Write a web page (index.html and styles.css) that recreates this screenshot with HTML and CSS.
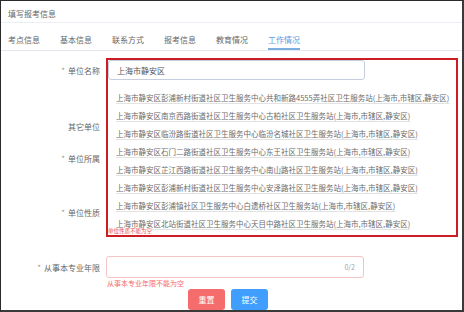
FILE: index.html
```html
<!DOCTYPE html>
<html lang="zh-CN">
<head>
    <meta charset="UTF-8">
    <meta name="viewport" content="width=device-width, initial-scale=1.0">
    <title>填写报考信息</title>
    <link rel="stylesheet" href="styles.css">
</head>
<body>
    <div class="window">
        <div class="title">填写报考信息</div>

        <div class="tabs">
            <span class="tab">考点信息</span>
            <span class="tab">基本信息</span>
            <span class="tab">联系方式</span>
            <span class="tab">报考信息</span>
            <span class="tab">教育情况</span>
            <span class="tab active">工作情况</span>
        </div>

        <div class="form">
            <div class="row row-name">
                <label class="label"><i class="star">*</i>单位名称</label>
                <div class="field">
                    <div class="input">上海市静安区</div>
                </div>
            </div>
            <div class="row row-other">
                <label class="label">其它单位</label>
            </div>
            <div class="row row-belong">
                <label class="label"><i class="star">*</i>单位所属</label>
            </div>
            <div class="row row-type">
                <label class="label"><i class="star">*</i>单位性质</label>
            </div>
            <div class="row row-years">
                <label class="label"><i class="star">*</i>从事本专业年限</label>
                <div class="field">
                    <div class="input input-error">
                        <span class="count">0/2</span>
                    </div>
                </div>
            </div>
            <div class="error">从事本专业年限不能为空</div>
            <div class="buttons">
                <button class="btn btn-reset">重置</button>
                <button class="btn btn-submit">提交</button>
            </div>
        </div>

        <!-- suggestion popup for 单位名称 -->
        <ul class="suggest">
            <li>上海市静安区彭浦新村街道社区卫生服务中心共和新路4555弄社区卫生服务站(上海市,市辖区,静安区)</li>
            <li>上海市静安区南京西路街道社区卫生服务中心古柏社区卫生服务站(上海市,市辖区,静安区)</li>
            <li>上海市静安区临汾路街道社区卫生服务中心临汾名城社区卫生服务站(上海市,市辖区,静安区)</li>
            <li>上海市静安区石门二路街道社区卫生服务中心东王社区卫生服务站(上海市,市辖区,静安区)</li>
            <li>上海市静安区芷江西路街道社区卫生服务中心南山路社区卫生服务站(上海市,市辖区,静安区)</li>
            <li>上海市静安区彭浦新村街道社区卫生服务中心安泽路社区卫生服务站(上海市,市辖区,静安区)</li>
            <li>上海市静安区彭浦镇社区卫生服务中心白遗桥社区卫生服务站(上海市,市辖区,静安区)</li>
            <li>上海市静安区北站街道社区卫生服务中心天目中路社区卫生服务站(上海市,市辖区,静安区)</li>
        </ul>

        <!-- red annotation box -->
        <div class="mark">
            <span class="mark-error">单位性质不能为空</span>
        </div>
    </div>
</body>
</html>
```

FILE: styles.css
```css
* {
    box-sizing: border-box;
}
body {
    margin: 0;
    font-family: "Noto Sans CJK SC", "Noto Sans", sans-serif;
    background-color: white;
    color: #606266;
}
.window {
    position: relative;
    width: 464px;
    height: 312px;
    border-top: 1px solid #2b2b2b;
    border-left: 1px solid #2b2b2b;
    border-right: 2px solid #3a3a3a;
    border-bottom: 2px solid #3a3a3a;
    overflow: hidden;
}
.title {
    padding: 4px 0 0 7px;
    height: 22px;
    line-height: 17px;
    font-size: 8px;
    color: #666;
    border-bottom: 1px solid #ebeef5;
}
.tabs {
    display: flex;
    padding: 9px 0 0 7px;
    border-bottom: 1px solid #e4e7ed;
}
.tab {
    margin-right: 20px;
    font-size: 8px;
    line-height: 16px;
    color: #666;
    border-bottom: 2px solid transparent;
}
.tab.active {
    color: #5a9be0;
    border-bottom-color: #7aaedf;
}
.row {
    display: flex;
    align-items: center;
    height: 22px;
}
.row-name {
    margin-top: 8px;
}
.row-other {
    margin-top: 34px;
}
.row-belong {
    margin-top: 10px;
}
.row-type {
    margin-top: 32px;
}
.row-years {
    margin-top: 33px;
}
.label {
    width: 99px;
    text-align: right;
    font-size: 8px;
    color: #666;
}
.star {
    font-style: normal;
    color: #999;
    margin-right: 3px;
}
.field {
    margin-left: 6px;
}
.input {
    display: flex;
    align-items: center;
    width: 258px;
    height: 22px;
    padding: 0 8px;
    font-size: 8px;
    color: #555;
    border: 1px solid #c6cde0;
    border-radius: 3px;
}
.row-name .input {
    margin-left: 2px;
    width: 257px;
    height: 20px;
}
.input-error {
    justify-content: flex-end;
    border-color: #f4c4c4;
}
.count {
    font-size: 7px;
    color: #a0a3a8;
}
.error {
    margin: 1px 0 0 106px;
    font-size: 7px;
    line-height: 9px;
    color: #f56c6c;
}
.buttons {
    display: flex;
    gap: 6px;
    margin-top: 1px;
    padding-left: 187px;
}
.btn {
    width: 37px;
    height: 21px;
    padding: 0;
    border: none;
    border-radius: 3px;
    font-family: inherit;
    font-size: 8px;
    color: white;
}
.btn-reset {
    background-color: #f56c6c;
}
.btn-submit {
    background-color: #409eff;
}
.suggest {
    position: absolute;
    left: 107px;
    top: 82px;
    width: 348px;
    margin: 0;
    padding: 5px 0 0 0;
    list-style: none;
    background-color: white;
}
.suggest li {
    line-height: 9px;
    padding: 4.5px 0 4.5px 8px;
    font-size: 7.5px;
    color: #6b6b6b;
    white-space: nowrap;
    text-decoration: underline;
    text-decoration-color: #e2e2e2;
    text-underline-offset: 2px;
}
.mark {
    position: absolute;
    left: 105px;
    top: 57px;
    width: 352px;
    height: 179px;
    border: 2px solid #cc1d25;
}
.mark-error {
    position: absolute;
    left: 0;
    bottom: 0;
    font-size: 5.5px;
    line-height: 7px;
    color: #e8484f;
    background-color: white;
}
```
